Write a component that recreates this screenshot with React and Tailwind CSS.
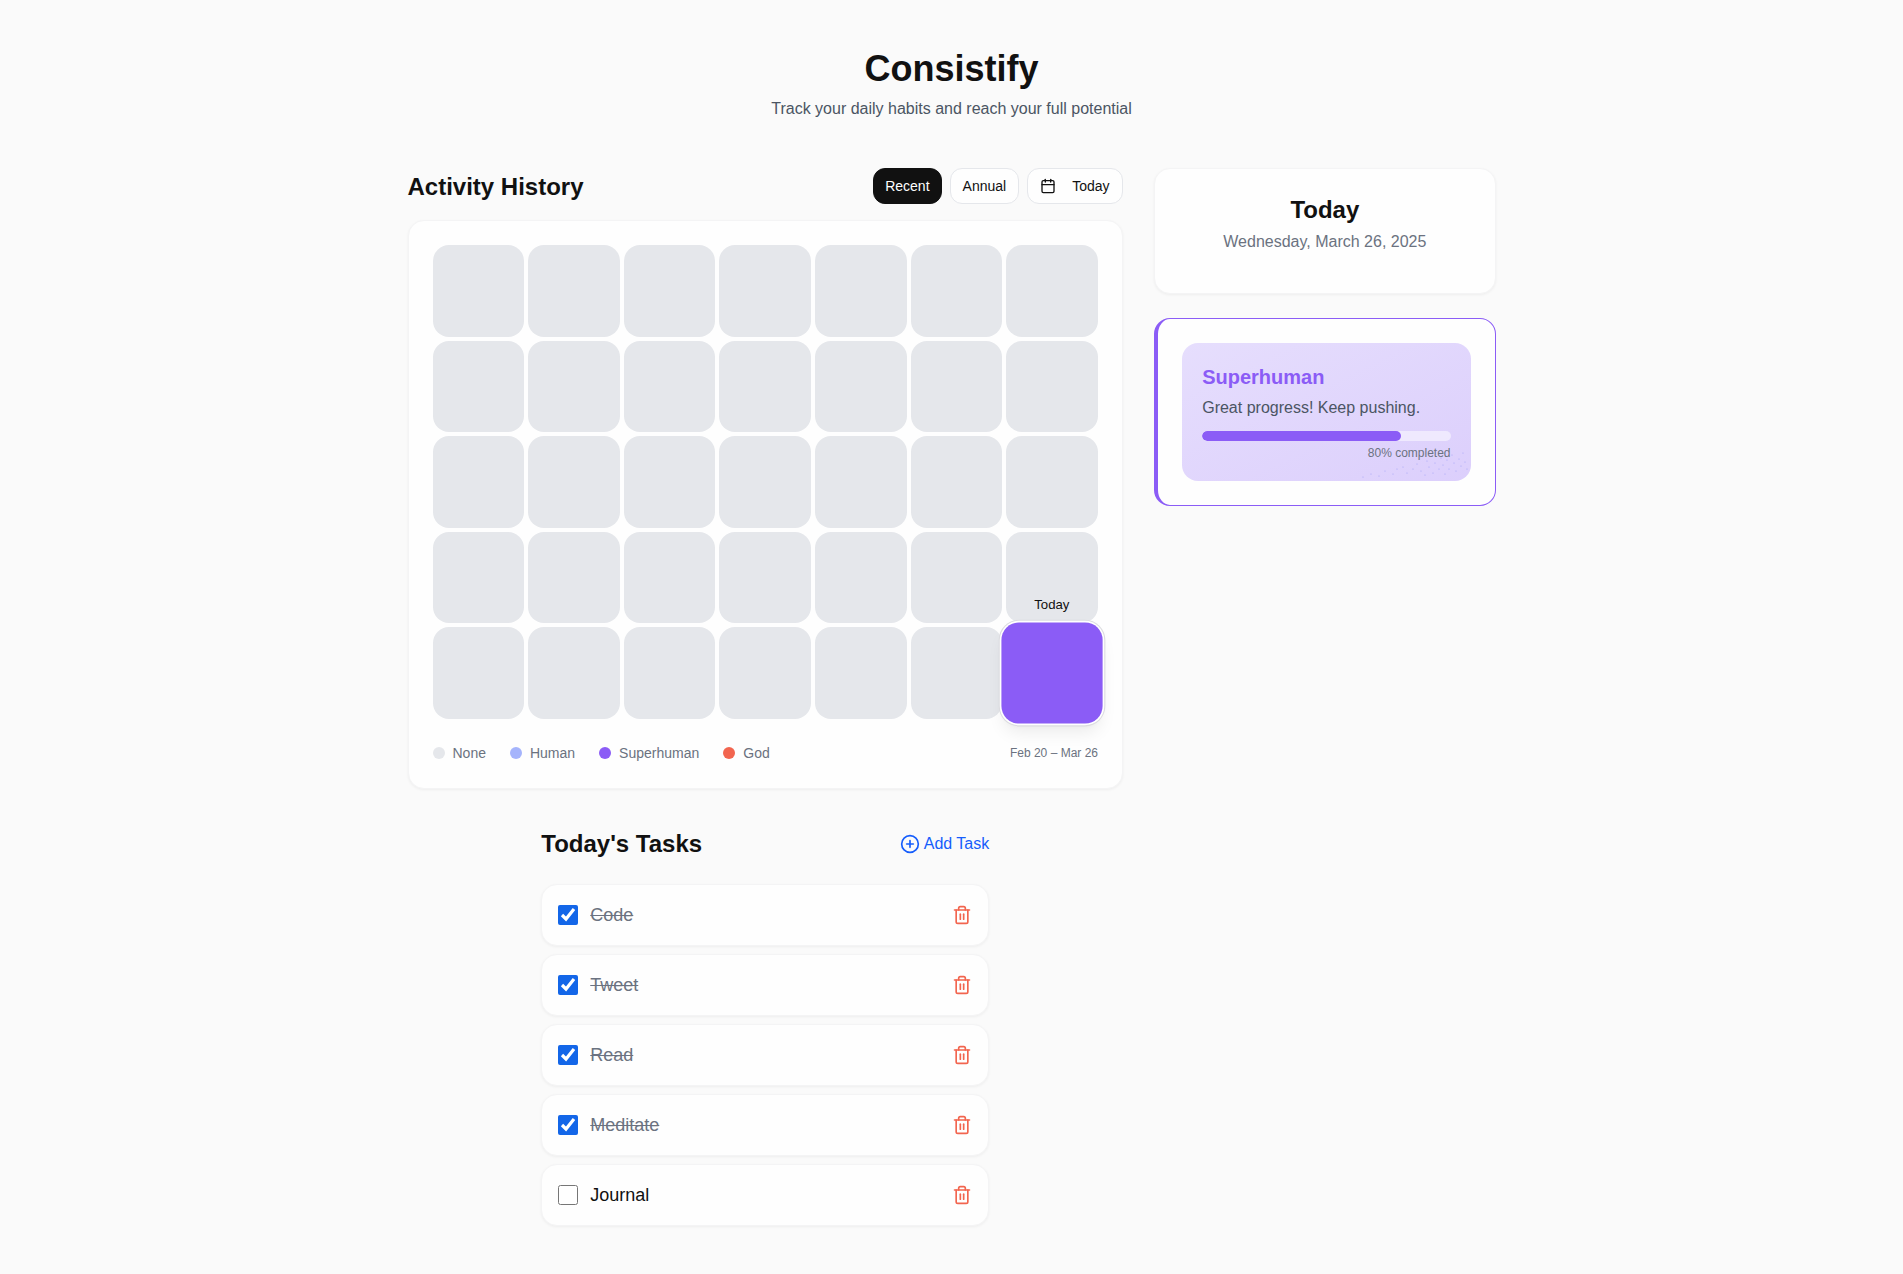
import { Calendar, PlusCircle, Trash2 } from 'lucide-react'

const LEGEND = [
  { label: 'None', color: 'bg-[#e5e7eb]' },
  { label: 'Human', color: 'bg-[#a5b4fc]' },
  { label: 'Superhuman', color: 'bg-[#8b5cf6]' },
  { label: 'God', color: 'bg-[#f2654f]' },
]

const TASKS = [
  { name: 'Code', done: true },
  { name: 'Tweet', done: true },
  { name: 'Read', done: true },
  { name: 'Meditate', done: true },
  { name: 'Journal', done: false },
]

const SPECKLE = [
  [4, 28], [12, 25], [20, 27], [26, 22], [34, 25], [38, 20], [44, 18], [48, 24], [54, 20], [58, 15],
  [62, 22], [66, 26], [68, 12], [70, 18], [74, 24], [76, 14], [80, 20], [82, 9], [84, 16], [86, 25],
  [88, 11], [90, 20], [93, 6], [95, 14], [97, 22], [100, 10], [102, 17], [104, 4], [106, 13], [108, 20],
]

function Cell({ today }) {
  if (today) {
    return (
      <div className="relative z-10 h-[91.5px] scale-110 rounded-2xl bg-[#8b5cf6] shadow-[0_0_0_1.5px_#fff,0_0_0_2.5px_#dcdce0,0_10px_15px_-3px_rgba(0,0,0,0.08),0_4px_6px_-4px_rgba(0,0,0,0.08)]">
        <span className="absolute -top-6 left-0 right-0 text-center text-xs text-[#111]">Today</span>
      </div>
    )
  }
  return <div className="h-[91.5px] rounded-2xl bg-[#e5e7eb]" />
}

function TaskRow({ task }) {
  return (
    <div className="flex items-center justify-between rounded-2xl border border-[#f4f4f5] bg-[#fefefe] p-4 shadow-[0_1px_3px_rgba(0,0,0,0.05)]">
      <div className="flex items-center gap-3">
        <input type="checkbox" checked={task.done} readOnly className="m-0 h-5 w-5 accent-[#1366e8]" />
        <span className={task.done ? 'text-lg text-[#6b7280] line-through' : 'text-lg text-[#111]'}>{task.name}</span>
      </div>
      <Trash2 size={20} className="text-[#f2654f]" />
    </div>
  )
}

export default function App() {
  const cells = Array.from({ length: 35 }, (_, i) => i)

  return (
    <div className="min-h-screen bg-[#fafafa] font-['Liberation_Sans',Arial,sans-serif] text-[#111]">
      <div className="mx-auto max-w-6xl px-8 pb-12 pt-[49px]">
        <header className="mb-[47px] text-center">
          <h1 className="text-4xl font-bold">Consistify</h1>
          <p className="mt-2 text-[#4b5563]">Track your daily habits and reach your full potential</p>
        </header>

        <div className="grid grid-cols-[715.5px_1fr] gap-[31.2px]">
          <div>
            <div className="mb-4 flex items-center justify-between">
              <h2 className="pt-0.5 text-2xl font-bold">Activity History</h2>
              <div className="flex items-center gap-2">
                <button className="rounded-xl border border-[#111] bg-[#111] px-[11.5px] py-2 text-sm leading-[18px] text-white">Recent</button>
                <button className="rounded-xl border border-[#e5e7eb] bg-[#fefefe] px-[11.5px] py-2 text-sm leading-[18px]">Annual</button>
                <button className="flex items-center gap-2 rounded-xl border border-[#e5e7eb] bg-[#fefefe] px-[12.5px] py-2 text-sm leading-[18px]">
                  <Calendar size={16} />
                  <span className="ml-2">Today</span>
                </button>
              </div>
            </div>

            <div className="rounded-2xl border border-[#f4f4f5] bg-[#fefefe] px-6 pb-[25px] pt-6 shadow-[0_1px_3px_rgba(0,0,0,0.05)]">
              <div className="grid grid-cols-7 gap-1">
                {cells.map((i) => (
                  <Cell key={i} today={i === 34} />
                ))}
              </div>
              <div className="mt-6 flex items-center justify-between">
                <div className="flex items-center gap-6">
                  {LEGEND.map((item) => (
                    <div key={item.label} className="flex items-center gap-2">
                      <span className={`h-3 w-3 rounded-full ${item.color}`} />
                      <span className="text-sm text-[#6b7280]">{item.label}</span>
                    </div>
                  ))}
                </div>
                <span className="text-xs text-[#6b7280]">Feb 20 – Mar 26</span>
              </div>
            </div>

            <div className="mx-auto mt-[39.5px] max-w-md">
              <div className="mb-6 flex items-center justify-between">
                <h2 className="text-2xl font-bold">Today's Tasks</h2>
                <button className="flex items-center gap-1 text-[#155dfc]">
                  <PlusCircle size={20} />
                  Add Task
                </button>
              </div>
              <div className="flex flex-col gap-2">
                {TASKS.map((task) => (
                  <TaskRow key={task.name} task={task} />
                ))}
              </div>
            </div>
          </div>

          <div>
            <div className="mb-6 rounded-2xl border border-[#f4f4f5] bg-[#fefefe] px-6 pb-[23px] pt-[25px] shadow-[0_1px_3px_rgba(0,0,0,0.05)]">
              <div className="mb-4 text-center">
                <h2 className="text-2xl font-bold">Today</h2>
                <p className="mt-1 text-[#6b7280]">Wednesday, March 26, 2025</p>
              </div>
            </div>

            <div className="rounded-2xl border border-l-4 border-[#8b5cf6] bg-[#fefefe] p-6">
              <div className="relative overflow-hidden rounded-2xl bg-gradient-to-br from-[#e6defd] to-[#dccffc] p-5">
                <h3 className="text-xl font-bold text-[#8b5cf6]">Superhuman</h3>
                <p className="mt-[5px] text-[#4b5563]">Great progress! Keep pushing.</p>
                <div className="mt-[11px] h-2.5 overflow-hidden rounded-full bg-white/50">
                  <div className="h-full rounded-full bg-[#8b5cf6]" style={{ width: '80%' }} />
                </div>
                <p className="mt-1 text-right text-xs text-[#6b7280]">80% completed</p>
                <svg className="absolute bottom-0 right-0" width="112" height="32" viewBox="0 0 112 32">
                  {SPECKLE.map(([x, y]) => (
                    <circle key={`${x}-${y}`} cx={x} cy={y} r="0.6" fill="#a5a4f5" />
                  ))}
                </svg>
              </div>
            </div>
          </div>
        </div>
      </div>
    </div>
  )
}
